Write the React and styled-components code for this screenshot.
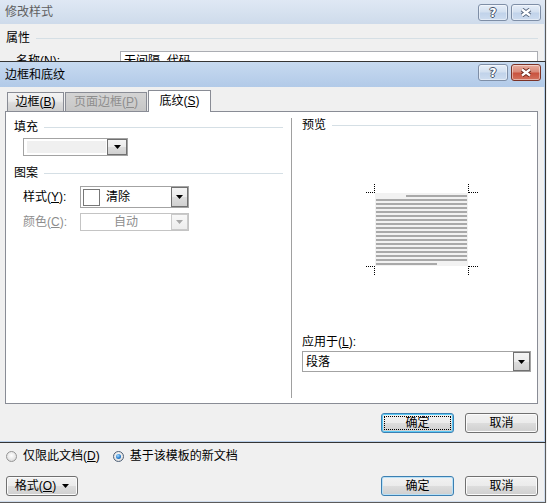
import React from 'react'
import styled, { createGlobalStyle } from 'styled-components'

const GlobalStyle = createGlobalStyle`
  html, body {
    margin: 0;
    padding: 0;
    background: #f0f0f0;
  }
  body {
    font-family: "Liberation Sans", "Noto Sans CJK SC", sans-serif;
    font-size: 12px;
    line-height: 14px;
    color: #000;
    text-autospace: no-autospace;
  }
`

const Key = styled.span`
  text-decoration: underline;
`

const Arrow = ({ color = '#000' }) => (
  <svg width="7" height="4" viewBox="0 0 7 4">
    <polygon points="0,0 7,0 3.5,4" fill={color} />
  </svg>
)

const HelpGlyph = styled.span`
  font-family: "DejaVu Sans", sans-serif;
  font-weight: bold;
  font-size: 12px;
  line-height: 12px;
  color: #fff;
  text-shadow: 1px 0 0 #46536a, -1px 0 0 #46536a, 0 1px 0 #46536a, 0 -1px 0 #46536a;
`

const CloseGlyph = ({ outline }) => (
  <svg width="14" height="9" viewBox="0 0 14 9">
    <path d="M3 1.5 L11 7.5 M11 1.5 L3 7.5" stroke={outline} strokeWidth="4.2" fill="none" />
    <path d="M3 1.5 L11 7.5 M11 1.5 L3 7.5" stroke="#fff" strokeWidth="2.2" fill="none" />
  </svg>
)

const PreviewGraphic = () => {
  const rows = Array.from({ length: 18 }, (_, i) => 11 + i * 4)
  return (
    <svg width="112" height="92" viewBox="0 0 112 92" shapeRendering="crispEdges">
      <rect x="9" y="9" width="93" height="73" fill="#f2f2f2" />
      {rows.map((y, i) => {
        const x1 = i === 0 ? 40 : 10
        const x2 = i === rows.length - 1 ? 71 : 101
        return <rect key={y} x={x1} y={y} width={x2 - x1} height="2" fill="#a9a9a9" />
      })}
      <g stroke="#000" strokeWidth="1" strokeDasharray="1 1" fill="none">
        <path d="M8.5 0 V9 M0 8.5 H8" />
        <path d="M102.5 0 V9 M103 8.5 H112" />
        <path d="M8.5 82 V92 M0 82.5 H8" />
        <path d="M102.5 82 V92 M103 82.5 H112" />
      </g>
    </svg>
  )
}

const Stage = styled.div`
  position: relative;
  width: 547px;
  height: 503px;
  overflow: hidden;
  background: #f0f0f0;
`

const Window = styled.div`
  box-sizing: border-box;
  display: flex;
  flex-direction: column;
  background: ${p => (p.$active ? '#b9cfe9' : '#cfdcec')};
`

const BackWindow = styled(Window)`
  width: 546px;
  height: 503px;
  border-right: 1px solid #5b5b5b;
  border-bottom: 1px solid #5b5b5b;
`

const FrontWindow = styled(Window)`
  position: absolute;
  top: 61px;
  left: 0;
  width: 546px;
  height: 382px;
  border: 1px solid #343434;
  border-left: none;
`

const TitleBar = styled.div`
  display: flex;
  align-items: center;
  height: ${p => p.$height}px;
  padding: 0 4px 0 5px;
  background: ${p =>
    p.$active
      ? 'linear-gradient(#c7daf0, #b2cae8)'
      : 'linear-gradient(#dfe8f4, #cedbeb)'};
`

const TitleText = styled.span`
  color: ${p => (p.$active ? '#000' : '#5f5f5f')};
`

const Captions = styled.div`
  margin-left: auto;
  align-self: flex-start;
  margin-top: ${p => p.$top}px;
  display: flex;
  gap: 3px;
`

const CaptionButton = styled.div`
  box-sizing: border-box;
  width: 30px;
  height: 17px;
  border-radius: 3px;
  display: flex;
  align-items: center;
  justify-content: center;
  border: 1px solid ${p => (p.$close ? '#7b3226' : '#7e8ea6')};
  box-shadow: inset 0 0 0 1px rgba(255, 255, 255, 0.45);
  background: ${p =>
    p.$close
      ? 'linear-gradient(#e9ad9f 0%, #d98a79 45%, #c9533f 55%, #d2725e 100%)'
      : 'linear-gradient(#e6eef8 0%, #d3e0f0 45%, #c1d3ea 55%, #cddcef 100%)'};
`

const Client = styled.div`
  flex: 1;
  display: flex;
  flex-direction: column;
  margin: 0 1px 1px 0;
  padding: ${p => p.$padding};
  background: #f0f0f0;
  min-height: 0;
`

const SectionHeader = styled.div`
  display: flex;
  align-items: center;
  gap: 6px;
  height: 14px;
  margin-top: ${p => p.$top || 0}px;

  &::after {
    content: '';
    flex: 1;
    height: 1px;
    background: #d5dfe5;
  }
`

const NameRow = styled.div`
  display: flex;
  margin-top: 6px;
`

const NameLabel = styled.span`
  width: 104px;
  padding-left: 10px;
  padding-top: 3px;
`

const TextInput = styled.div`
  flex: 1;
  box-sizing: border-box;
  height: 20px;
  border: 1px solid #abadb3;
  background: #fff;
  padding: 2px 3px 0;
`

const Filler = styled.div`
  flex: 1;
`

const RadioRow = styled.div`
  display: flex;
  align-items: center;
  height: 14px;
`

const RadioOption = styled.label`
  display: flex;
  align-items: center;
  gap: 6px;
  margin-right: ${p => p.$gap || 0}px;
`

const RadioCircle = styled.span`
  box-sizing: border-box;
  width: 11px;
  height: 11px;
  border-radius: 50%;
  border: 1px solid ${p => (p.$checked ? '#4f6178' : '#959595')};
  background: radial-gradient(circle at 50% 40%, #ffffff 0%, #e6e6e6 60%, #cfcfcf 100%);
  display: flex;
  align-items: center;
  justify-content: center;

  &::after {
    content: '';
    display: ${p => (p.$checked ? 'block' : 'none')};
    width: 5px;
    height: 5px;
    border-radius: 50%;
    background: radial-gradient(circle at 40% 35%, #a6dcff 0%, #2a7fd0 55%, #0e4d91 100%);
  }
`

const ButtonRow = styled.div`
  display: flex;
  align-items: center;
  gap: 11px;
  margin-top: ${p => p.$top}px;
  justify-content: flex-end;
`

const PushButton = styled.div`
  position: relative;
  box-sizing: border-box;
  width: ${p => p.$width || 73}px;
  height: 20px;
  display: flex;
  align-items: center;
  justify-content: center;
  gap: 6px;
  border-radius: 3px;
  border: 1px solid ${p => (p.$default ? '#3c7fb1' : '#707070')};
  box-shadow: inset 0 0 0 1px ${p => (p.$focused ? '#5ccaf6' : p.$default ? '#b9e1f7' : '#fbfbfb')};
  background: linear-gradient(#f2f2f2 0%, #ebebeb 50%, #dddddd 51%, #cfcfcf 100%);
  margin-right: ${p => (p.$push ? 'auto' : '0')};

  &::after {
    content: '';
    display: ${p => (p.$focused ? 'block' : 'none')};
    position: absolute;
    inset: 2px;
    border: 1px dotted #000;
  }
`

const TabStrip = styled.div`
  position: relative;
  z-index: 1;
  display: flex;
  align-items: flex-end;
  gap: 1px;
  height: 21px;
  padding-left: 2px;
`

const Tab = styled.div`
  box-sizing: border-box;
  width: ${p => p.$width}px;
  height: ${p => (p.$selected ? 22 : 19)}px;
  margin-bottom: ${p => (p.$selected ? -1 : 0)}px;
  padding-bottom: ${p => (p.$selected ? 2 : 0)}px;
  border: 1px solid #898c95;
  border-bottom: none;
  display: flex;
  align-items: center;
  justify-content: center;
  color: ${p => (p.$disabled ? '#8d8d8d' : '#000')};
  background: ${p =>
    p.$selected
      ? '#fff'
      : p.$disabled
      ? 'linear-gradient(#d4d4d4, #c6c6c6)'
      : 'linear-gradient(#f3f3f3 0%, #ebebeb 45%, #dcdcdc 55%, #d0d0d0 100%)'};
`

const Panel = styled.div`
  box-sizing: border-box;
  height: 293px;
  border: 1px solid #898c95;
  background: #fff;
  display: grid;
  grid-template-columns: 285px 1px 1fr;
`

const Column = styled.div`
  display: flex;
  flex-direction: column;
  padding: ${p => p.$padding};
`

const Divider = styled.div`
  background: #a0a0a0;
  margin: 6px 0 5px;
`

const FieldRow = styled.div`
  display: flex;
  align-items: center;
  margin-top: ${p => p.$top}px;
  padding-left: ${p => p.$indent || 0}px;
`

const FieldLabel = styled.span`
  width: 57px;
  color: ${p => (p.$disabled ? '#8d8d8d' : '#000')};
`

const Combo = styled.div`
  box-sizing: border-box;
  display: flex;
  width: ${p => p.$width};
  height: ${p => p.$height}px;
  border: 1px solid ${p => (p.$disabled ? '#c4c4c4' : '#a3a3a3')};
  background: #fff;
`

const ComboValue = styled.div`
  flex: 1;
  display: flex;
  align-items: center;
  justify-content: ${p => (p.$center ? 'center' : 'flex-start')};
  gap: 6px;
  padding: ${p => p.$padding || '0 3px'};
  color: ${p => (p.$disabled ? '#8d8d8d' : '#000')};
`

const DropButton = styled.div`
  box-sizing: border-box;
  width: ${p => p.$width || 17}px;
  display: flex;
  align-items: center;
  justify-content: center;
  border: 1px solid ${p => (p.$disabled ? '#cacaca' : '#707070')};
  background: ${p =>
    p.$disabled
      ? 'linear-gradient(#f8f8f8, #ededed)'
      : 'linear-gradient(#f4f4f4 0%, #ebebeb 50%, #dddddd 51%, #d0d0d0 100%)'};
`

const FillBar = styled.div`
  flex: 1;
  align-self: stretch;
  margin: 2px 0;
  background: #f0f0f0;
`

const Swatch = styled.span`
  box-sizing: border-box;
  width: 17px;
  height: 17px;
  border: 1px solid #777;
  background: #fff;
`

const PreviewBox = styled.div`
  display: flex;
  justify-content: center;
  padding-left: 10px;
  margin-top: 52px;
`

const ApplyLabel = styled.div`
  margin-top: auto;
`

const ComboBox = ({ width, height, disabled, center, padding, buttonWidth, children }) => (
  <Combo $width={width} $height={height} $disabled={disabled}>
    <ComboValue $center={center} $disabled={disabled} $padding={padding}>
      {children}
    </ComboValue>
    <DropButton $disabled={disabled} $width={buttonWidth}>
      <Arrow color={disabled ? '#a8a8a8' : '#000'} />
    </DropButton>
  </Combo>
)

const App = () => (
  <>
    <GlobalStyle />
    <Stage>
      <BackWindow>
        <TitleBar $height={24}>
          <TitleText>修改样式</TitleText>
          <Captions $top={4}>
            <CaptionButton><HelpGlyph>?</HelpGlyph></CaptionButton>
            <CaptionButton><CloseGlyph outline="#5a6a82" /></CaptionButton>
          </Captions>
        </TitleBar>
        <Client $padding="7px 6px 5px 6px">
          <SectionHeader>属性</SectionHeader>
          <NameRow>
            <NameLabel>名称(<Key>N</Key>):</NameLabel>
            <TextInput>无间隔_代码</TextInput>
          </NameRow>
          <Filler />
          <RadioRow>
            <RadioOption $gap={13}>
              <RadioCircle />
              <span>仅限此文档(<Key>D</Key>)</span>
            </RadioOption>
            <RadioOption>
              <RadioCircle $checked />
              <span>基于该模板的新文档</span>
            </RadioOption>
          </RadioRow>
          <ButtonRow $top={13}>
            <PushButton $width={72} $push>
              <span>格式(<Key>O</Key>)</span>
              <Arrow />
            </PushButton>
            <PushButton $default>确定</PushButton>
            <PushButton>取消</PushButton>
          </ButtonRow>
        </Client>
      </BackWindow>

      <FrontWindow $active>
        <TitleBar $height={25} $active>
          <TitleText $active>边框和底纹</TitleText>
          <Captions $top={2}>
            <CaptionButton><HelpGlyph>?</HelpGlyph></CaptionButton>
            <CaptionButton $close><CloseGlyph outline="#6b2419" /></CaptionButton>
          </Captions>
        </TitleBar>
        <Client $padding="3px 6px 0 5px">
          <TabStrip>
            <Tab $width={57}><span>边框(<Key>B</Key>)</span></Tab>
            <Tab $width={82} $disabled><span>页面边框(<Key>P</Key>)</span></Tab>
            <Tab $width={63} $selected><span>底纹(<Key>S</Key>)</span></Tab>
          </TabStrip>
          <Panel>
            <Column $padding="8px 8px 0 8px">
              <SectionHeader>填充</SectionHeader>
              <FieldRow $top={4} $indent={9}>
                <ComboBox width="105px" height={18} padding="0 1px 0 3px" buttonWidth={20}>
                  <FillBar />
                </ComboBox>
              </FieldRow>
              <SectionHeader $top={10}>图案</SectionHeader>
              <FieldRow $top={6} $indent={9}>
                <FieldLabel>样式(<Key>Y</Key>):</FieldLabel>
                <ComboBox width="109px" height={22} padding="0 2px">
                  <Swatch />
                  <span>清除</span>
                </ComboBox>
              </FieldRow>
              <FieldRow $top={5} $indent={9}>
                <FieldLabel $disabled>颜色(<Key>C</Key>):</FieldLabel>
                <ComboBox width="109px" height={18} disabled center>
                  <span>自动</span>
                </ComboBox>
              </FieldRow>
            </Column>
            <Divider />
            <Column $padding="6px 6px 31px 10px">
              <SectionHeader>预览</SectionHeader>
              <PreviewBox>
                <PreviewGraphic />
              </PreviewBox>
              <ApplyLabel>应用于(<Key>L</Key>):</ApplyLabel>
              <FieldRow $top={2}>
                <ComboBox width="100%" height={21}>
                  <span>段落</span>
                </ComboBox>
              </FieldRow>
            </Column>
          </Panel>
          <ButtonRow $top={9}>
            <PushButton $default $focused>确定</PushButton>
            <PushButton>取消</PushButton>
          </ButtonRow>
        </Client>
      </FrontWindow>
    </Stage>
  </>
)

export default App
